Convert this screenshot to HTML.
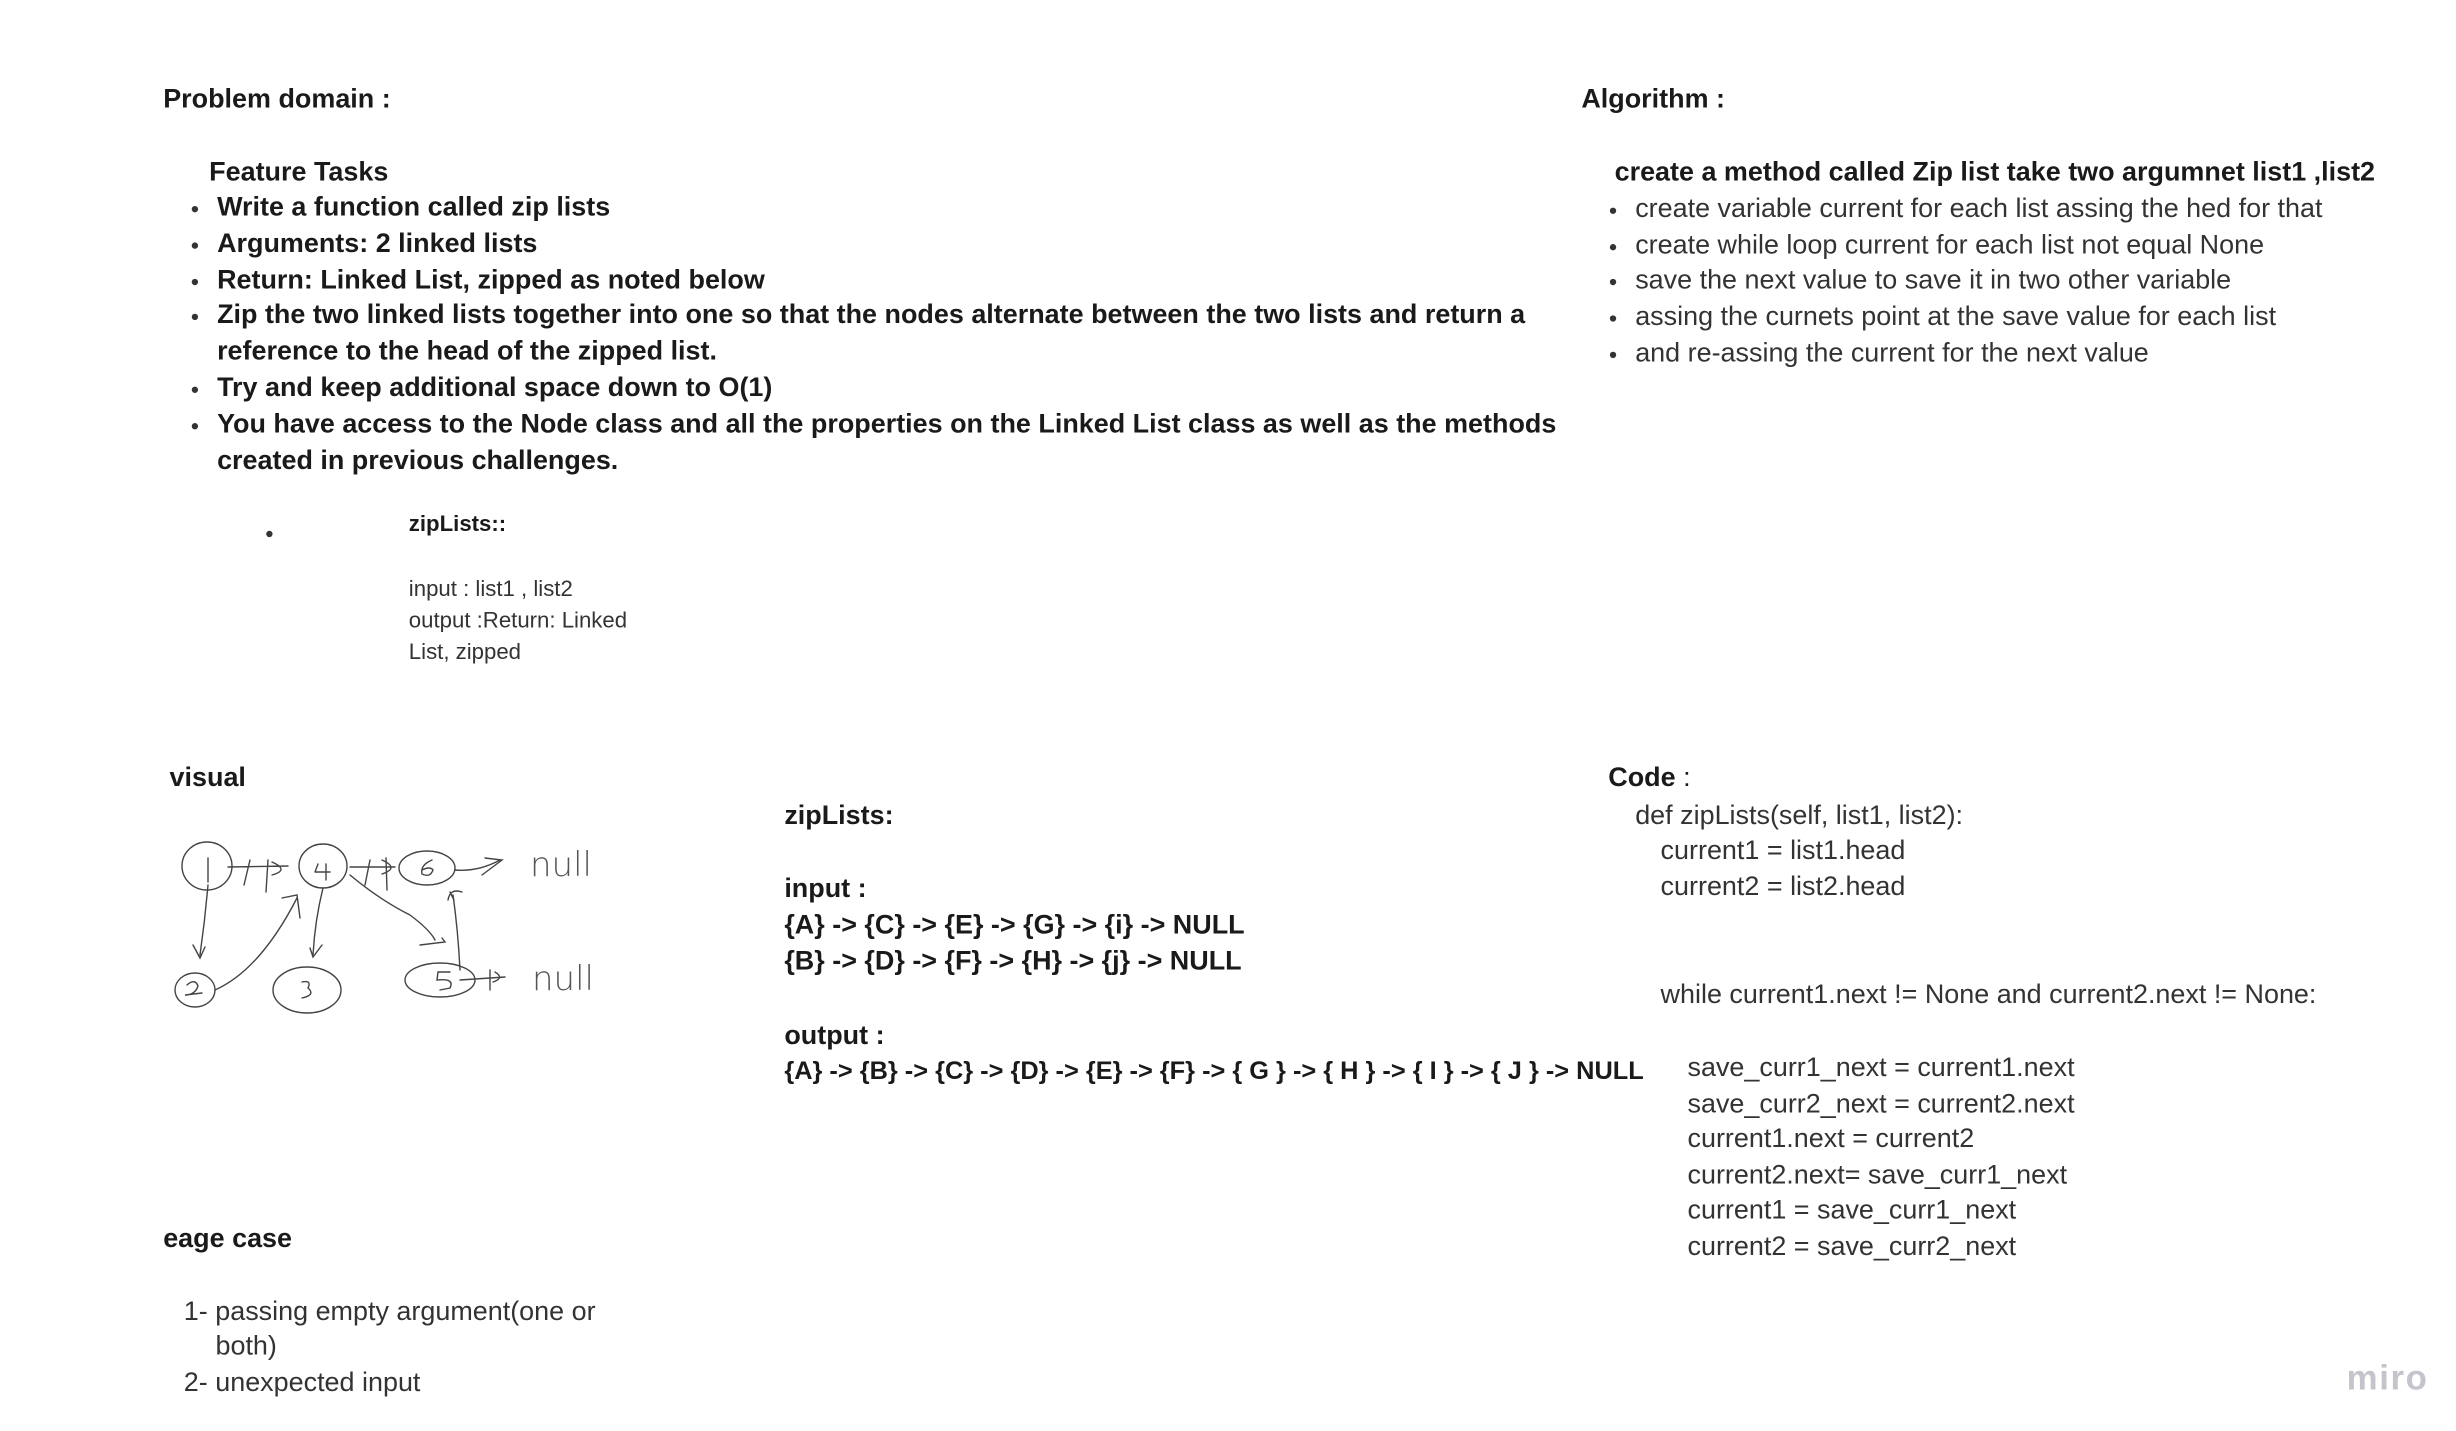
<!DOCTYPE html>
<html><head><meta charset="utf-8"><style>
html,body{margin:0;padding:0;background:#fff;}
body{width:2456px;height:1431px;overflow:hidden;position:relative;}
#w{position:absolute;left:0;top:0;width:1550px;height:903px;transform:scale(1.5845);transform-origin:0 0;font-family:"Liberation Sans",sans-serif;color:#1a1a1a;}
.t{position:absolute;white-space:nowrap;font-size:17px;line-height:20px;transform:translateY(-10px);}
.b{font-weight:bold;}
.r{color:#333;}
.s{font-size:14px;}
.bul:before{content:"";position:absolute;left:-16px;top:9px;width:4px;height:4px;border-radius:2px;background:#333;}
</style></head><body>
<div id="w">
<div class="t b" style="left:103px;top:63px">Problem domain :</div>
<div class="t b" style="left:132px;top:109px">Feature Tasks</div>
<div class="t b bul" style="left:137px;top:131px">Write a function called zip lists</div>
<div class="t b bul" style="left:137px;top:154px">Arguments: 2 linked lists</div>
<div class="t b bul" style="left:137px;top:177px">Return: Linked List, zipped as noted below</div>
<div class="t b bul" style="left:137px;top:199px">Zip the two linked lists together into one so that the nodes alternate between the two lists and return a</div>
<div class="t b" style="left:137px;top:222px">reference to the head of the zipped list.</div>
<div class="t b bul" style="left:137px;top:245px">Try and keep additional space down to O(1)</div>
<div class="t b bul" style="left:137px;top:268px">You have access to the Node class and all the properties on the Linked List class as well as the methods</div>
<div class="t b" style="left:137px;top:291px">created in previous challenges.</div>
<div style="position:absolute;left:168px;top:335px;width:4px;height:4px;border-radius:2px;background:#333"></div>
<div class="t b s" style="left:258px;top:330px">zipLists::</div>
<div class="t r s" style="left:258px;top:371px">input :  list1 , list2</div>
<div class="t r s" style="left:258px;top:391px">output :Return: Linked</div>
<div class="t r s" style="left:258px;top:411px">List, zipped</div>

<div class="t b" style="left:998px;top:63px">Algorithm :</div>
<div class="t b" style="left:1019px;top:109px">create a method called Zip list  take two argumnet  list1 ,list2</div>
<div class="t r bul" style="left:1032px;top:132px">create variable current for each list assing the hed for that</div>
<div class="t r bul" style="left:1032px;top:155px">create while loop  current for each list not  equal None</div>
<div class="t r bul" style="left:1032px;top:177px">save the next value to save it in two other variable</div>
<div class="t r bul" style="left:1032px;top:200px">assing the curnets point at the save value for each list</div>
<div class="t r bul" style="left:1032px;top:223px">and re-assing the current for the next value</div>

<div class="t b" style="left:107px;top:491px">visual</div>
<div class="t b" style="left:495px;top:515px">zipLists:</div>
<div class="t b" style="left:495px;top:561px">input :</div>
<div class="t b" style="left:495px;top:584px">{A} -&gt; {C} -&gt; {E} -&gt; {G} -&gt; {i} -&gt; NULL</div>
<div class="t b" style="left:495px;top:607px">{B} -&gt; {D} -&gt; {F} -&gt; {H} -&gt; {j} -&gt; NULL</div>
<div class="t b" style="left:495px;top:654px">output :</div>
<div class="t b" style="left:495px;top:677px;font-size:16px">{A} -&gt; {B} -&gt; {C} -&gt; {D} -&gt; {E} -&gt; {F} -&gt; { G } -&gt; { H } -&gt; { I } -&gt; { J } -&gt; NULL</div>

<div class="t" style="left:1015px;top:491px"><b>Code</b> :</div>
<div class="t r" style="left:1032px;top:515px">def zipLists(self, list1, list2):</div>
<div class="t r" style="left:1048px;top:537px">current1 = list1.head</div>
<div class="t r" style="left:1048px;top:560px">current2 = list2.head</div>
<div class="t r" style="left:1048px;top:628px">while current1.next != None and current2.next != None:</div>
<div class="t r" style="left:1065px;top:674px">save_curr1_next = current1.next</div>
<div class="t r" style="left:1065px;top:697px">save_curr2_next = current2.next</div>
<div class="t r" style="left:1065px;top:719px">current1.next = current2</div>
<div class="t r" style="left:1065px;top:742px">current2.next= save_curr1_next</div>
<div class="t r" style="left:1065px;top:764px">current1 = save_curr1_next</div>
<div class="t r" style="left:1065px;top:787px">current2 = save_curr2_next</div>

<div class="t b" style="left:103px;top:782px">eage case</div>
<div class="t r" style="left:116px;top:828px">1- passing empty argument(one or</div>
<div class="t r" style="left:136px;top:850px">both)</div>
<div class="t r" style="left:116px;top:873px">2- unexpected input</div>

<div class="t b" style="left:1481px;top:870px;font-size:22px;color:#c4c4cc;letter-spacing:1px">miro</div>
</div>

<svg style="position:absolute;left:160px;top:830px" width="500" height="210" viewBox="0 0 500 210" fill="none" stroke="#444" stroke-width="1.4" stroke-linecap="round">
<ellipse cx="47" cy="36" rx="25" ry="24"/>
<path d="M48,28 L48,52"/>
<path d="M68,37 L128,36 M90,30 L84,55 M108,30 L106,62 M112,32 Q130,40 112,45"/>
<ellipse cx="163" cy="36" rx="24" ry="22"/>
<path d="M155,42 L170,42 M158,34 L155,42 M166,34 L166,50"/>
<path d="M190,37 L235,37 M210,30 L205,55 M226,28 L227,60 M222,30 Q240,38 222,44"/>
<ellipse cx="267" cy="38" rx="28" ry="17"/>
<path d="M272,30 Q260,35 262,44 Q270,48 273,40 Q270,36 262,40"/>
<path d="M295,40 Q318,42 340,30 M325,28 L342,30 L322,45"/>
<text x="370" y="46" font-family="DejaVu Sans" font-size="34" font-weight="200" fill="#555" stroke="none">null</text>
<ellipse cx="35" cy="160" rx="20" ry="17"/>
<path d="M27,155 Q35,148 38,156 Q35,165 25,165 L42,163"/>
<ellipse cx="147" cy="160" rx="34" ry="23"/>
<path d="M142,152 Q152,150 148,158 Q156,165 142,168"/>
<ellipse cx="280" cy="150" rx="35" ry="17"/>
<path d="M290,142 L278,142 L277,150 Q295,148 290,158 L280,160"/>
<path d="M48,55 Q45,90 40,125 M33,115 L40,128 L45,117"/>
<path d="M55,160 Q100,140 137,68 M122,68 L137,65 L140,88"/>
<path d="M163,58 Q155,90 153,125 M150,118 L153,127 L162,115"/>
<path d="M190,45 Q220,70 250,85 Q270,100 275,110 M260,115 L285,112 L282,108"/>
<path d="M300,140 Q298,100 293,65 M288,70 Q290,58 302,62 M290,62 L294,70"/>
<path d="M300,150 L345,147 M330,140 L330,160 M335,142 Q345,148 333,152"/>
<text x="372" y="160" font-family="DejaVu Sans" font-size="34" font-weight="200" fill="#555" stroke="none">null</text>
</svg>
</body></html>
